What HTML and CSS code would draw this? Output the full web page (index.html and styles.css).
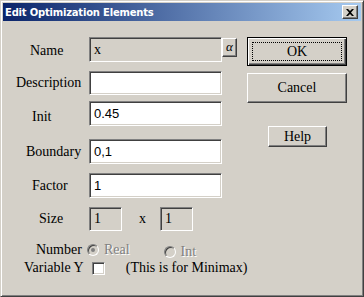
FILE: index.html
```html
<!DOCTYPE html>
<html>
<head>
    <title>Edit Optimization Elements</title>
    <link rel="stylesheet" href="styles.css">
</head>
<body>
    <div class="window">
        <div class="titlebar">
            <span class="title">Edit Optimization Elements</span>
            <span class="close-btn">
                <svg width="8" height="7" viewBox="0 0 8 7"><path d="M0 0h2l2 2 2-2h2L5 3.5 8 7H6L4 5 2 7H0l3-3.5z" fill="#000"/></svg>
            </span>
        </div>
        <div class="client">
            <div class="form">
                <div class="row row-name">
                    <span class="label label-name" style="padding-left:27px">Name</span>
                    <div class="edit readonly serif">x</div>
                    <span class="alpha-btn">&alpha;</span>
                </div>
                <div class="row row-desc">
                    <span class="label" style="padding-left:13px">Description</span>
                    <div class="edit"></div>
                </div>
                <div class="row row-init">
                    <span class="label label-low" style="padding-left:29px">Init</span>
                    <div class="edit">0.45</div>
                </div>
                <div class="row row-bound">
                    <span class="label" style="padding-left:23px">Boundary</span>
                    <div class="edit">0,1</div>
                </div>
                <div class="row row-factor">
                    <span class="label" style="padding-left:29px">Factor</span>
                    <div class="edit">1</div>
                </div>
                <div class="row row-size">
                    <span class="label" style="padding-left:36px">Size</span>
                    <div class="edit readonly serif small">1</div>
                    <span class="times">x</span>
                    <div class="edit readonly serif small">1</div>
                </div>
                <div class="row row-number">
                    <span class="label-number">Number</span>
                    <span class="radio checked"></span>
                    <span class="disabled">Real</span>
                    <span class="radio radio-int"></span>
                    <span class="disabled int-text">Int</span>
                </div>
                <div class="row row-var">
                    <span class="label-var">Variable Y</span>
                    <span class="checkbox"></span>
                    <span class="note">(This is for Minimax)</span>
                </div>
            </div>
            <div class="buttons">
                <div class="btn btn-default"><span class="focus">OK</span></div>
                <div class="btn btn-cancel">Cancel</div>
                <div class="btn btn-help">Help</div>
            </div>
        </div>
    </div>
</body>
</html>
```

FILE: styles.css
```css
body {
    margin: 0;
    background-color: #D4D0C8;
    font-family: "Liberation Serif", "Times New Roman", serif;
    font-size: 14px;
    color: #000000;
}
.window {
    width: 364px;
    height: 297px;
    box-sizing: border-box;
    border: 1px solid;
    border-color: #D4D0C8 #404040 #404040 #D4D0C8;
    box-shadow: inset 1px 1px #FFFFFF, inset -1px -1px #808080;
    padding: 2px;
    background-color: #D4D0C8;
}
.titlebar {
    height: 18px;
    display: flex;
    align-items: center;
    justify-content: space-between;
    background: linear-gradient(to right, #0A246A, #A6CAF0);
    color: #FFFFFF;
    padding-left: 2px;
}
.title {
    font-family: "DejaVu Sans", Verdana, sans-serif;
    font-weight: bold;
    font-size: 10px;
    letter-spacing: -0.2px;
}
.close-btn {
    width: 14px;
    height: 12px;
    margin-right: 3px;
    display: flex;
    align-items: center;
    justify-content: center;
    background-color: #D4D0C8;
    border: 1px solid;
    border-color: #FFFFFF #404040 #404040 #FFFFFF;
    box-shadow: inset -1px -1px #808080;
}
.client {
    display: flex;
}
.form {
    width: 244px;
    flex-shrink: 0;
    display: flex;
    flex-direction: column;
}
.row {
    display: flex;
    align-items: center;
    white-space: nowrap;
}
.row > * {
    flex-shrink: 0;
}
.label {
    width: 86px;
    box-sizing: border-box;
}
.label-name {
    padding-top: 3px;
}
.label-low {
    padding-top: 6px;
}
.edit {
    width: 133px;
    height: 100%;
    box-sizing: border-box;
    border: 1px solid;
    border-color: #808080 #FFFFFF #FFFFFF #808080;
    box-shadow: inset 1px 1px #404040, inset -1px -1px #D4D0C8;
    background-color: #FFFFFF;
    font-family: "Liberation Sans", Arial, sans-serif;
    font-size: 13px;
    padding-left: 4px;
    display: flex;
    align-items: center;
}
.edit.readonly {
    background-color: #D4D0C8;
}
.edit.serif {
    font-family: "Liberation Serif", "Times New Roman", serif;
    font-size: 14px;
}
.edit.small {
    width: 33px;
}
.alpha-btn {
    width: 15px;
    height: 19px;
    box-sizing: border-box;
    align-self: flex-start;
    margin-top: 1px;
    border: 1px solid;
    border-color: #FFFFFF #404040 #404040 #FFFFFF;
    box-shadow: inset -1px -1px #808080;
    font-style: italic;
    font-size: 13px;
    text-align: center;
    line-height: 15px;
}
.row-name { margin-top: 16px; height: 25px; }
.row-desc { margin-top: 9px; height: 24px; }
.row-init { margin-top: 6px; height: 25px; }
.row-bound { margin-top: 13px; height: 25px; }
.row-factor { margin-top: 9px; height: 25px; }
.row-size { margin-top: 9px; height: 24px; }
.times {
    margin-left: 17px;
    margin-right: 14px;
}
.row-number {
    margin-top: 11px;
    height: 16px;
}
.label-number {
    margin-left: 33px;
    margin-right: 5px;
}
.radio {
    width: 12px;
    height: 12px;
    box-sizing: border-box;
    border-radius: 50%;
    border: 1px solid;
    border-color: #808080 #FFFFFF #FFFFFF #808080;
    box-shadow: inset 1px 1px #404040;
    background-color: #D4D0C8;
    display: flex;
    align-items: center;
    justify-content: center;
}
.radio.checked::after {
    content: "";
    width: 4px;
    height: 4px;
    border-radius: 50%;
    background-color: #808080;
}
.radio-int {
    margin-left: 34px;
    margin-top: 4px;
}
.disabled {
    color: #808080;
    text-shadow: 1px 1px #FFFFFF;
    margin-left: 5px;
}
.int-text {
    margin-top: 4px;
}
.row-var {
    margin-top: 3px;
    height: 14px;
}
.label-var {
    margin-left: 21px;
    margin-right: 8px;
}
.checkbox {
    width: 13px;
    height: 13px;
    box-sizing: border-box;
    border: 1px solid;
    border-color: #808080 #FFFFFF #FFFFFF #808080;
    box-shadow: inset 1px 1px #404040, inset -1px -1px #D4D0C8;
    background-color: #FFFFFF;
}
.note {
    margin-left: 21px;
}
.buttons {
    display: flex;
    flex-direction: column;
}
.btn {
    width: 100px;
    box-sizing: border-box;
    display: flex;
    align-items: center;
    justify-content: center;
    border: 1px solid;
    border-color: #FFFFFF #404040 #404040 #FFFFFF;
    box-shadow: inset -1px -1px #808080;
}
.btn-default {
    margin-top: 16px;
    height: 29px;
    border: 1px solid #000000;
    box-shadow: inset 1px 1px #FFFFFF, inset -1px -1px #404040, inset -2px -2px #808080;
    padding: 4px;
}
.focus {
    width: 100%;
    height: 100%;
    box-sizing: border-box;
    border: 1px dotted #000000;
    display: flex;
    align-items: center;
    justify-content: center;
}
.btn-cancel {
    margin-top: 7px;
    height: 30px;
}
.btn-help {
    margin-top: 23px;
    margin-left: 21px;
    width: 59px;
    height: 21px;
}
```
